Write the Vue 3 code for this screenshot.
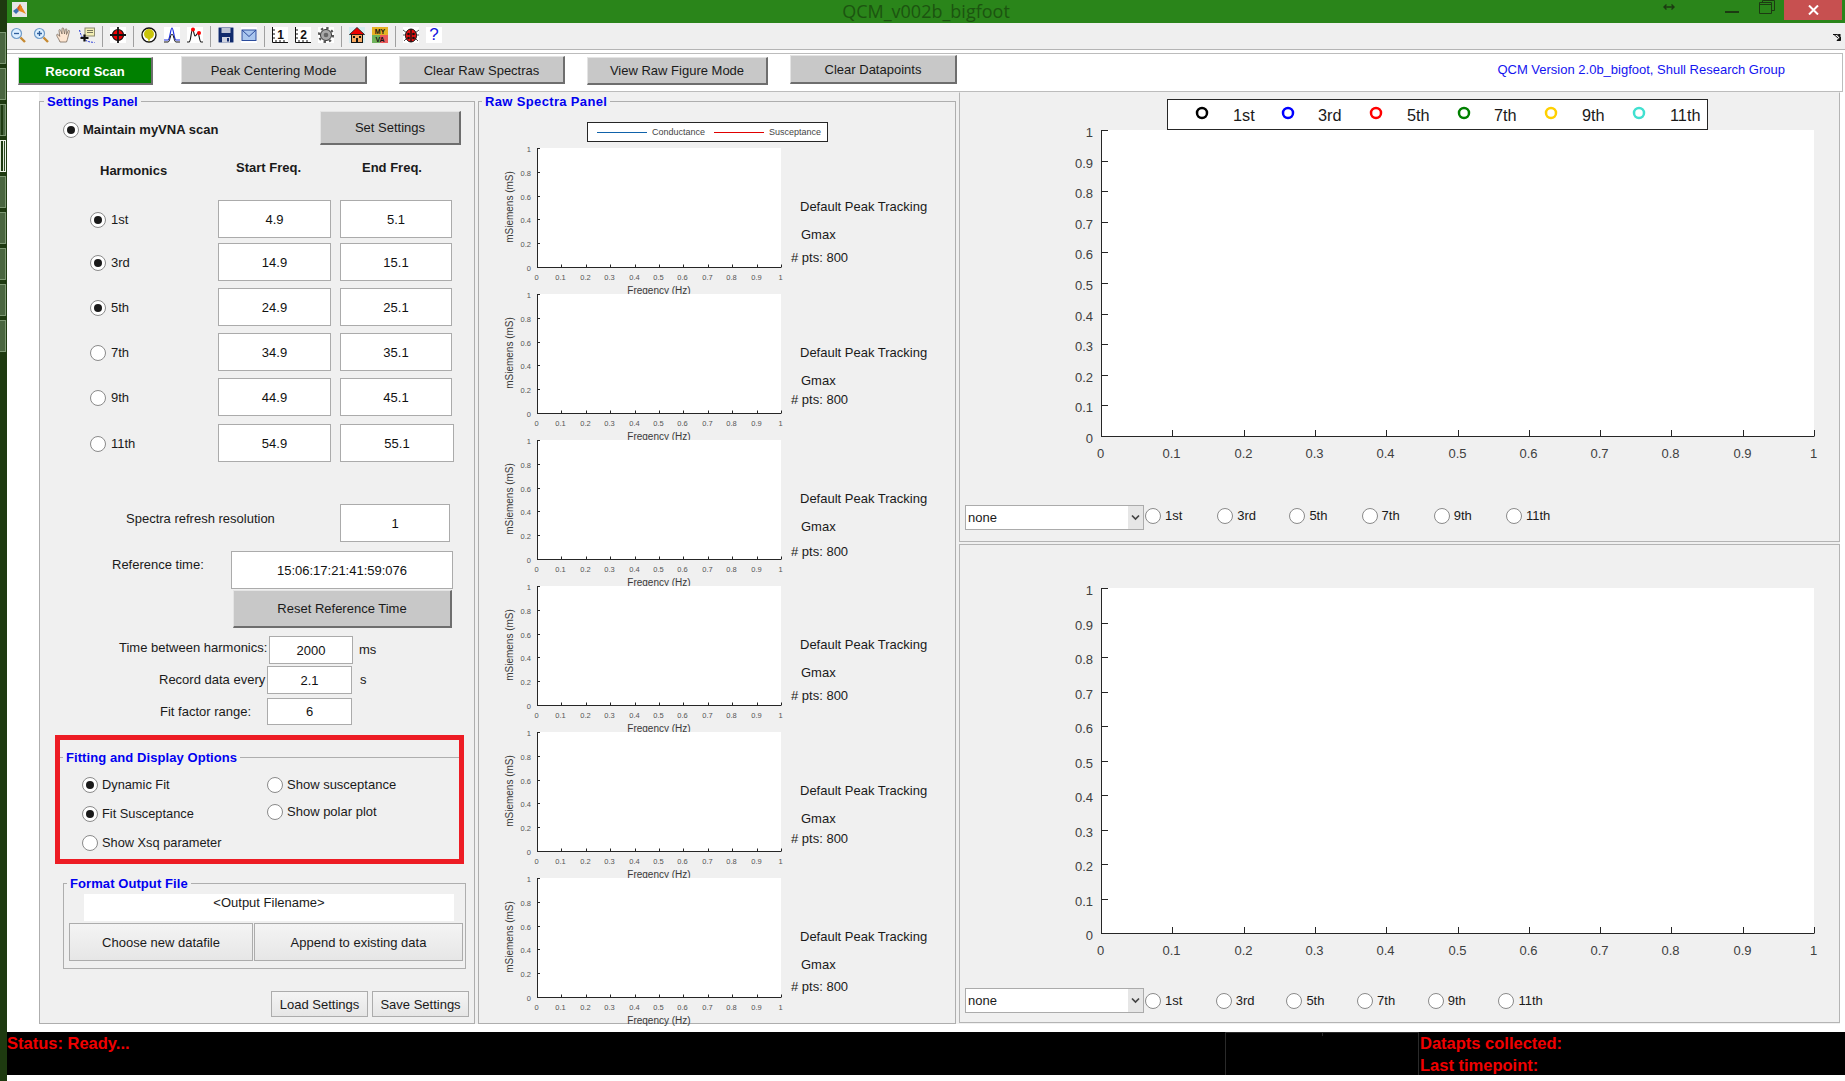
<script setup>
const tiles = ['', '', 'split', 'lit', '', '', '', '', '']
const harmonics = [
  { n: '1st', on: true, s: '4.9', e: '5.1' },
  { n: '3rd', on: true, s: '14.9', e: '15.1' },
  { n: '5th', on: true, s: '24.9', e: '25.1' },
  { n: '7th', on: false, s: '34.9', e: '35.1' },
  { n: '9th', on: false, s: '44.9', e: '45.1' },
  { n: '11th', on: false, s: '54.9', e: '55.1', wide: true }
]
const names = ['1st', '3rd', '5th', '7th', '9th', '11th']
const fmt = (i, n) => (i === 0 ? '0' : i === n ? '1' : (i / n).toFixed(1))
const rawX = Array.from({ length: 11 }, (_, i) => ({ x: Math.round(58 + i * 24.4) + 0.5, t: fmt(i, 10) }))
const rawY = Array.from({ length: 6 }, (_, i) => ({ y: Math.round(124 - i * 23.8) + 0.5, t: fmt(i, 5) }))
const rawRows = [{ gap: 7 }, { gap: 3 }, { gap: 9 }, { gap: 7 }, { gap: 4 }, { gap: 6 }]
const legend = [
  { n: '1st', c: '#000000', m: 242, t: 273 },
  { n: '3rd', c: '#0000ff', m: 328, t: 358 },
  { n: '5th', c: '#ff0000', m: 416, t: 447 },
  { n: '7th', c: '#008000', m: 504, t: 534 },
  { n: '9th', c: '#ffd000', m: 591, t: 622 },
  { n: '11th', c: '#40e0d0', m: 679, t: 710 }
]
const makePlot = (h, top, bottom, wide, cls) => ({
  h, top, bottom, cls, wide,
  xs: Array.from({ length: 11 }, (_, i) => ({ x: Math.round(141 + i * 71.3) + 0.5, t: fmt(i, 10) })),
  ys: Array.from({ length: 11 }, (_, i) => ({ y: Math.round(bottom - (i * (bottom - top)) / 10) + 0.5, t: fmt(i, 10) }))
})
const plots = [makePlot(412, 37, 343, true, 'p1'), makePlot(443, 43, 388, false, 'p2')]
</script>

<template>
  <div class="app">
    <aside class="strip">
      <div v-for="(t, i) in tiles" :key="i" class="tile" :class="t"></div>
    </aside>
    <div class="main">
      <header class="title">
        <div class="title-left">
          <svg class="logo" width="15" height="15" viewBox="0 0 15 15">
            <rect width="15" height="15" fill="#e6e6e6" />
            <polygon points="1,9 5,6 7,9 4,12" fill="#3b6fb0" />
            <polygon points="5,6 8,2 10,5 7,9" fill="#d9551f" />
            <polygon points="8,2 11,7 14,12 10,10 7,9" fill="#e8891c" />
          </svg>
        </div>
        <div class="title-text">QCM_v002b_bigfoot</div>
        <div class="title-right">
          <svg class="resize" width="12" height="8" viewBox="0 0 12 8"><path d="M1 4h10M3.5 1.5L1 4l2.5 2.5M8.5 1.5L11 4 8.5 6.5" fill="none" stroke="#1c3a12" stroke-width="1.4" /></svg>
          <div class="win-min"></div>
          <svg class="win-max" width="16" height="14" viewBox="0 0 16 14"><path d="M3.5 2.5V.5h12v10h-3M.5 2.5h12v11H.5zM.5 4.5h12" fill="none" stroke="#1c3a12" /></svg>
          <div class="win-close"><svg width="11" height="10" viewBox="0 0 11 10"><path d="M1 0.5l9 9M10 0.5l-9 9" stroke="#fff" stroke-width="2" /></svg></div>
        </div>
      </header>

      <nav class="toolbar">
        <svg class="ic" viewBox="0 0 16 16"><circle cx="6.5" cy="6.5" r="5" fill="#dcefff" stroke="#6f9bc8" stroke-width="1.2" /><path d="M10.5 10.5l4.5 4.5" stroke="#c68a32" stroke-width="2.4" /><path d="M4 6.5h5" stroke="#2f5f9c" stroke-width="1.3" /></svg>
        <svg class="ic" viewBox="0 0 16 16"><circle cx="6.5" cy="6.5" r="5" fill="#dcefff" stroke="#6f9bc8" stroke-width="1.2" /><path d="M10.5 10.5l4.5 4.5" stroke="#c68a32" stroke-width="2.4" /><path d="M4 6.5h5M6.5 4v5" stroke="#2f5f9c" stroke-width="1.3" /></svg>
        <svg class="ic" viewBox="0 0 16 16"><path d="M4 15C3 12 1 10 .7 8c0-1 1-1 2 0l1 1.400L3 3.500c0-1.200 1.400-1.200 1.700 0L6 7 6 1.800c0-1.200 1.600-1.200 1.700 0L8.500 7l.8-4.500c.3-1.100 1.600-.9 1.500.3L10.500 7.500l1.600-3.600c.5-1 1.700-.5 1.300.6L12 10c-.3 2-1 3.500-1.500 5z" fill="#fde6d2" stroke="#7a6a5c" stroke-width=".8" /></svg>
        <svg class="ic" viewBox="0 0 16 16"><rect x="6" y="1" width="9.500" height="8" fill="#f3eeb4" stroke="#8c8c70" /><path d="M8 3.500h6M8 5.500h6" stroke="#77775f" /><path d="M.5 3c1 4 2 7 5 9.500s6 2.500 10 3" fill="none" stroke="#2b3ed8" stroke-dasharray="2 1" /><path d="M1.500 11h8M5.500 7.500v7" stroke="#111" stroke-width="2.200" /></svg>
        <i class="sep"></i>
        <svg class="ic" viewBox="0 0 16 16"><rect width="16" height="16" fill="#fff" /><circle cx="8" cy="8" r="5.500" fill="#f00000" stroke="#111" stroke-width="1.200" /><path d="M8 0v16M0 8h16" stroke="#111" stroke-width="1.800" /></svg>
        <i class="sep"></i>
        <svg class="ic" viewBox="0 0 16 16"><circle cx="8" cy="8" r="7" fill="#fff" stroke="#111" stroke-width="1.300" /><circle cx="8" cy="7" r="5" fill="#c9c40c" /><path d="M6.500 11l1.500 4 1.500-4z" fill="#c9c40c" /></svg>
        <svg class="ic" viewBox="0 0 16 16"><rect width="16" height="16" fill="#fff" /><path d="M0 13h4c2 0 2.500-12 4-12s2 12 4 12h4" fill="none" stroke="#1d2fe0" stroke-width="1.200" /><path d="M0 15h4c2 0 2-7 4-8 2 1 2 8 4 8h4" fill="none" stroke="#111" /></svg>
        <svg class="ic" viewBox="0 0 16 16"><rect width="16" height="16" fill="#fff" /><path d="M0 15h2c2 0 2-12 3.500-12S7 9 8 9c1.500 0 2-3 3-3s1.500 9 3 9h2" fill="none" stroke="#111" stroke-width="1.100" /><circle cx="6" cy="2.500" r="2" fill="#f00" /><circle cx="12" cy="6" r="2" fill="#f00" /></svg>
        <i class="sep"></i>
        <svg class="ic ic-save" viewBox="0 0 16 16"><rect width="16" height="16" fill="#fff" /><path d="M.5.500h15v15H.5z" fill="#102a6c" /><rect x="3.500" y="1" width="9" height="5" fill="#bdc3d4" /><rect x="4" y="10" width="8" height="5.500" fill="#cfd3df" /><rect x="9" y="11" width="2" height="3.500" fill="#102a6c" /></svg>
        <svg class="ic" viewBox="0 0 16 16"><rect width="16" height="16" fill="#fff" /><rect x="1" y="3" width="14" height="10.500" fill="#aac6ee" stroke="#2c4c9c" /><path d="M1 3l7 6.500L15 3" fill="none" stroke="#2c4c9c" /></svg>
        <i class="sep"></i>
        <svg class="ic" viewBox="0 0 16 16"><rect width="16" height="16" fill="#fff" /><path d="M.5 0v15.500H16" fill="none" stroke="#111" /><path d="M0 3h3M0 7h3M0 11h3M4 13v3M8 13v3M12 13v3" stroke="#111" /><text class="ruler" x="8.500" y="12">1</text></svg>
        <svg class="ic" viewBox="0 0 16 16"><rect width="16" height="16" fill="#fff" /><path d="M.5 0v15.500H16" fill="none" stroke="#111" /><path d="M0 3h3M0 7h3M0 11h3M4 13v3M8 13v3M12 13v3" stroke="#111" /><text class="ruler" x="8.500" y="12">2</text></svg>
        <svg class="ic" viewBox="0 0 16 16"><rect width="16" height="16" fill="#fff" /><circle cx="8" cy="8" r="5.500" fill="#a8a8a8" stroke="#333" /><circle cx="8" cy="8" r="7" fill="none" stroke="#555" stroke-width="2.200" stroke-dasharray="2.400 3.100" /><circle cx="8" cy="8" r="2.300" fill="#666" /></svg>
        <i class="sep"></i>
        <svg class="ic" viewBox="0 0 16 16"><rect width="16" height="16" fill="#d6ecf0" /><rect x="2.500" y="7" width="11" height="8.500" fill="#f7a860" stroke="#111" /><polygon points="8,.500 15.500,7.500 .5,7.500" fill="#ee0000" stroke="#111" stroke-width=".8" /><rect x="4" y="9" width="2" height="2" fill="#111" /><rect x="10" y="9" width="2" height="2" fill="#111" /><rect x="7" y="11" width="2" height="4.500" fill="#111" /></svg>
        <svg class="ic" viewBox="0 0 16 16"><rect width="16" height="8" fill="#e6b224" /><rect y="8" width="8" height="8" fill="#6fb35c" /><rect x="8" y="8" width="8" height="8" fill="#ea5a5a" /><text class="vna" x="8" y="7">MY</text><text class="vna" x="8" y="15">VA</text></svg>
        <i class="sep"></i>
        <svg class="ic" viewBox="0 0 16 16"><rect width="16" height="16" fill="#fff" /><path d="M0 3l4 3M16 3l-4 3M0 8h3M16 8h-3M1 14l3-3M15 14l-3-3" stroke="#555" /><ellipse cx="8" cy="8.500" rx="5.500" ry="6.500" fill="#ea1010" stroke="#111" /><path d="M8 2v13" stroke="#111" stroke-width="1.300" /><circle cx="5.500" cy="7" r="1.300" fill="#111" /><circle cx="10.500" cy="7" r="1.300" fill="#111" /><circle cx="5.500" cy="11" r="1.300" fill="#111" /><circle cx="10.500" cy="11" r="1.300" fill="#111" /></svg>
        <span class="help">?</span>
        <svg class="grip" width="8" height="7" viewBox="0 0 8 7"><path d="M0 .5h4L7 3.500V0M4 6.500h3.500V3L4 6.500zM1 .5L5 4" fill="#111" stroke="#111" /></svg>
      </nav>

      <section class="actions">
        <button class="mbtn record">Record Scan</button>
        <button class="mbtn peak">Peak Centering Mode</button>
        <button class="mbtn clear-raw">Clear Raw Spectras</button>
        <button class="mbtn view">View Raw Figure Mode</button>
        <button class="mbtn clear-data">Clear Datapoints</button>
        <span class="version">QCM Version 2.0b_bigfoot, Shull Research Group</span>
      </section>

      <section class="content">
        <div class="panels">
          <fieldset class="frame settings">
            <legend class="flegend">Settings Panel</legend>
            <div class="col">
              <div class="maintain">
                <span class="radio on"></span>
                <b class="maintain-label">Maintain myVNA scan</b>
                <button class="mbtn set">Set Settings</button>
              </div>
              <div class="harm">
                <b class="h-harm">Harmonics</b>
                <b class="h-start">Start Freq.</b>
                <b class="h-end">End Freq.</b>
                <template v-for="h in harmonics" :key="h.n">
                  <div class="harm-radio"><span class="radio" :class="{ on: h.on }"></span><span>{{ h.n }}</span></div>
                  <div class="box harm-box">{{ h.s }}</div>
                  <div class="box harm-box" :class="{ wide: h.wide }">{{ h.e }}</div>
                </template>
              </div>
              <div class="spectra-row">
                <span class="spectra-label">Spectra refresh resolution</span>
                <div class="box spectra-box">1</div>
              </div>
              <div class="ref-row">
                <span class="ref-label">Reference time:</span>
                <div class="box ref-box">15:06:17:21:41:59:076</div>
              </div>
              <button class="mbtn reset">Reset Reference Time</button>
              <div class="trow t1"><span class="tl">Time between harmonics:</span><div class="box tb">2000</div><span class="unit">ms</span></div>
              <div class="trow t2"><span class="tl">Record data every</span><div class="box tb">2.1</div><span class="unit">s</span></div>
              <div class="trow t3"><span class="tl">Fit factor range:</span><div class="box tb">6</div></div>

              <div class="redbox">
                <fieldset class="frame fitting">
                  <legend class="flegend">Fitting and Display Options</legend>
                  <div class="fit-cols">
                    <div class="fit-left">
                      <div class="opt"><span class="radio on"></span><span>Dynamic Fit</span></div>
                      <div class="opt"><span class="radio on"></span><span>Fit Susceptance</span></div>
                      <div class="opt"><span class="radio"></span><span>Show Xsq parameter</span></div>
                    </div>
                    <div class="fit-right">
                      <div class="opt"><span class="radio"></span><span>Show susceptance</span></div>
                      <div class="opt"><span class="radio"></span><span>Show polar plot</span></div>
                    </div>
                  </div>
                </fieldset>
              </div>

              <fieldset class="frame format">
                <legend class="flegend">Format Output File</legend>
                <div class="filename">&lt;Output Filename&gt;</div>
                <div class="file-btns">
                  <button class="gbtn choose">Choose new datafile</button>
                  <button class="gbtn append">Append to existing data</button>
                </div>
              </fieldset>

              <div class="save-row">
                <button class="gbtn load">Load Settings</button>
                <button class="gbtn load">Save Settings</button>
              </div>
            </div>
          </fieldset>

          <fieldset class="frame raw">
            <legend class="flegend">Raw Spectra Panel</legend>
            <div class="raw-legend">
              <i class="rl-line blue"></i><span class="rl-text">Conductance</span>
              <i class="rl-line red"></i><span class="rl-text">Susceptance</span>
            </div>
            <div v-for="(r, idx) in rawRows" :key="idx" class="raw-row">
              <svg class="raw-svg" width="310" height="146" viewBox="0 0 310 146">
                <rect x="58" y="5" width="244" height="119" fill="#fff" />
                <path d="M58.500 5V124.500H302.500" fill="none" stroke="#262626" />
                <path v-for="t in rawX" :key="t.t" :d="`M${t.x} 124V121.500`" stroke="#262626" />
                <path v-for="t in rawY" :key="t.t" :d="`M58 ${t.y}H61`" stroke="#262626" />
                <text v-for="t in rawX" :key="'x' + t.t" class="rt" :x="t.x - 1" y="137" text-anchor="middle">{{ t.t }}</text>
                <text v-for="t in rawY" :key="'y' + t.t" class="rt" x="52" :y="t.y + 3" text-anchor="end">{{ t.t }}</text>
                <text class="ra" x="180" y="150.500" text-anchor="middle">Freqency (Hz)</text>
                <text class="ra" x="0" y="0" text-anchor="middle" transform="translate(34 64) rotate(-90)">mSiemens (mS)</text>
              </svg>
              <div class="raw-side">
                <span class="s1">Default Peak Tracking</span>
                <span class="s2">Gmax</span>
                <span class="s3" :style="{ marginTop: r.gap + 'px' }"># pts: 800</span>
              </div>
            </div>
          </fieldset>

          <div class="right">
            <div v-for="p in plots" :key="p.cls" class="plot-panel" :class="p.cls">
              <svg class="plot-svg" width="879" :height="p.h" :viewBox="`0 0 879 ${p.h}`">
                <rect x="141" :y="p.top" width="713" :height="p.bottom - p.top" fill="#fff" />
                <path :d="`M141.500 ${p.top}V${p.bottom + 0.5}H854.500`" fill="none" stroke="#262626" />
                <path v-for="t in p.xs" :key="t.t" :d="`M${t.x} ${p.bottom}v-6`" stroke="#262626" />
                <path v-for="t in p.ys" :key="t.t" :d="`M141 ${t.y}h7`" stroke="#262626" />
                <text v-for="t in p.xs" :key="'x' + t.t" class="pt" :x="t.x - 1" :y="p.bottom + 22" text-anchor="middle">{{ t.t }}</text>
                <text v-for="t in p.ys" :key="'y' + t.t" class="pt" x="133" :y="t.y + 6" text-anchor="end">{{ t.t }}</text>
                <g v-if="p.wide">
                  <rect x="207.500" y="6.500" width="540" height="30" fill="#fff" stroke="#262626" />
                  <template v-for="l in legend" :key="l.n">
                    <circle :cx="l.m" cy="20" r="5" fill="none" :stroke="l.c" stroke-width="2.500" />
                    <text class="lt" :x="l.t" y="28">{{ l.n }}</text>
                  </template>
                </g>
              </svg>
              <div class="plot-controls">
                <div class="select">
                  <span class="sel-text">none</span>
                  <span class="sel-arrow"><svg width="9" height="7" viewBox="0 0 9 7"><path d="M1 1.500l3.500 3.500L8 1.500" fill="none" stroke="#444" stroke-width="1.700" /></svg></span>
                </div>
                <div v-for="n in names" :key="n" class="ph"><span class="radio"></span><span>{{ n }}</span></div>
              </div>
            </div>
          </div>
        </div>
      </section>

      <footer class="status">
        <div class="st-cell st-main">Status: Ready...</div>
        <div class="st-cell st-mid"></div>
        <div class="st-cell st-data">
          <div>Datapts collected:</div>
          <div>Last timepoint:</div>
        </div>
      </footer>
      <div class="foot"></div>
    </div>
  </div>
</template>

<style>
html, body { margin: 0; background: #fff; }
</style>

<style scoped>
* { box-sizing: border-box; }
.app { width: 1845px; height: 1081px; display: flex; overflow: hidden; background: #fff; font: 13px/16px "Liberation Sans", Arial, sans-serif; color: #1a1a1a; }

.strip { width: 7px; flex: none; background: #1e3a10; padding-top: 32px; display: flex; flex-direction: column; gap: 4px; }
.tile { width: 6px; height: 32px; background: #4a6640; border: 1px solid #7d9873; border-left: 0; }
.tile.split { background: linear-gradient(90deg, #4a6640 0 1px, #1e3a10 1px 3px, #4a6640 3px); }
.tile.lit { background: linear-gradient(90deg, #dfe9d8 0 1px, #1e3a10 1px 3px, #dfe9d8 3px 4px, #2c4a20 4px); border-color: #eef3ea; }

.main { flex: 1; min-width: 0; display: flex; flex-direction: column; }

.title { height: 23px; flex: none; background: #2a851a; display: grid; grid-template-columns: 1fr auto 1fr; align-items: center; }
.title-left { display: flex; padding-left: 5px; }
.logo { margin-top: -4px; }
.title-text { font: 18px/23px "Open Sans", sans-serif; color: #1c5410; }
.title-right { display: flex; align-items: flex-start; justify-content: flex-end; height: 23px; padding-right: 3px; }
.resize { margin-top: 3px; margin-right: 50px; }
.win-min { width: 14px; height: 2px; background: #1c3a12; margin-top: 11px; margin-right: 20px; }
.win-max { margin-top: 0; margin-right: 9px; }
.win-close { width: 58px; height: 20px; background: #c75050; display: flex; align-items: center; justify-content: center; }

.toolbar { height: 27px; flex: none; background: #efefef; border-bottom: 1px solid #b4b4b4; display: flex; align-items: flex-start; gap: 7px; padding: 4px 0 0 3px; }
.ic { width: 16px; height: 16px; flex: none; display: block; }
.sep { width: 1px; height: 21px; margin-top: -1px; background: #a0a0a0; flex: none; }
.grip { margin-left: auto; margin-right: 4px; margin-top: 7px; }
.ruler { font: 700 12px "Liberation Sans", sans-serif; fill: #111; text-anchor: middle; }
.vna { font: 700 7px "Liberation Sans", sans-serif; fill: #111; text-anchor: middle; }
.help { width: 16px; height: 16px; flex: none; background: #fff; color: #1414e0; font: 17px/16px "Liberation Sans", sans-serif; text-align: center; }

.actions { height: 39px; flex: none; margin-top: 3px; margin-right: 2px; background: #fff; border: 1px solid #bcbcbc; border-left: 0; display: flex; align-items: flex-start; }
.mbtn { font: 13px/16px "Liberation Sans", sans-serif; color: #1a1a1a; background: #c8c8c8; border: 1px solid; border-color: #e4e4e4 #6e6e6e #6e6e6e #e4e4e4; border-width: 1px 2px 2px 1px; padding: 2px 0 0; flex: none; }
.record { width: 135px; height: 28px; margin: 3px 0 0 11px; background: #008000; color: #fff; font-weight: 700; border-color: #cfcfcf #6e6e6e #6e6e6e #cfcfcf; }
.peak { width: 186px; height: 28px; margin: 2px 0 0 28px; }
.clear-raw { width: 166px; height: 28px; margin: 2px 0 0 32px; }
.view { width: 181px; height: 28px; margin: 3px 0 0 22px; padding-top: 0; }
.clear-data { width: 167px; height: 29px; margin: 1px 0 0 22px; }
.version { margin-left: auto; margin-right: 57px; margin-top: 8px; color: #1414f0; font-size: 13px; }

.content { height: 940px; flex: none; padding: 0 5px 8px 32px; }
.panels { height: 932px; background: #f0f0f0; display: flex; align-items: flex-start; }

.frame { margin: 0; padding: 0; border: 1px solid #aeaeae; min-width: 0; }
.flegend { padding: 0 3px; margin-left: 3px; color: #0000f0; font-weight: 700; line-height: 16px; transform: translateY(1px); letter-spacing: .08px; }
.col { display: flex; flex-direction: column; }
.box { background: #fff; border: 1px solid #ababab; display: flex; align-items: center; justify-content: center; color: #111; flex: none; padding-top: 1px; }

.settings { width: 436px; height: 931px; margin-top: 1px; }
.settings > .flegend { margin-left: 4px; }
.maintain { display: flex; align-items: center; height: 34px; margin-top: 2px; padding-left: 23px; padding-right: 13px; }
.maintain .radio { margin-top: 3px; }
.maintain-label { margin-left: 4px; margin-top: 3px; }
.set { width: 141px; height: 34px; margin-left: auto; padding-top: 0; }

.radio { width: 16px; height: 16px; flex: none; border-radius: 50%; border: 1px solid #8a8a8a; background: #fff; display: inline-flex; align-items: center; justify-content: center; }
.radio.on::after { content: ""; width: 8px; height: 8px; border-radius: 50%; background: #1a1a1a; }

.harm { display: grid; grid-template-columns: 169px 113px 112px; column-gap: 9px; grid-template-rows: 55px 43px 45px 45px 45px 46px 38px; }
.h-harm { margin: 18px 0 0 60px; }
.h-start { margin: 15px 0 0 18px; }
.h-end { margin: 15px 0 0 22px; }
.harm-radio { display: flex; align-items: center; gap: 5px; height: 38px; padding: 2px 0 0 50px; }
.harm-box { height: 38px; }
.harm-box.wide { width: 114px; }

.spectra-row { display: flex; align-items: center; height: 38px; margin-top: 42px; }
.spectra-label { width: 300px; padding-left: 86px; margin-bottom: 8px; }
.spectra-box { width: 110px; height: 38px; }
.ref-row { display: flex; margin-top: 9px; }
.ref-label { width: 191px; padding-left: 72px; margin-top: 6px; }
.ref-box { width: 222px; height: 38px; }
.reset { width: 219px; height: 38px; margin: 1px 0 0 193px; padding-top: 0; }
.trow { display: flex; align-items: center; }
.tl { flex: none; }
.tb { height: 100%; }
.unit { margin-left: 6px; }
.t1 { height: 28px; margin-top: 8px; }
.t1 .tl { width: 229px; padding-left: 79px; margin-bottom: 4px; }
.t1 .tb { width: 84px; }
.t2 { height: 28px; margin-top: 2px; }
.t2 .tl { width: 227px; padding-left: 119px; }
.t2 .tb { width: 85px; }
.t2 .unit { margin-left: 8px; }
.t3 { height: 27px; margin-top: 4px; }
.t3 .tl { width: 227px; padding-left: 120px; }
.t3 .tb { width: 85px; }

.redbox { width: 409px; height: 129px; margin: 10px 0 0 15px; border: 5px solid #ed1c24; }
.fitting { margin-top: 9px; border-width: 1px 0 0; }
.fit-cols { display: flex; }
.fit-left { width: 207px; padding: 10px 0 0 22px; display: flex; flex-direction: column; gap: 9px; font-size: 12.800px; }
.fit-right { padding-top: 10px; display: flex; flex-direction: column; gap: 7px; }
.opt { display: flex; align-items: center; gap: 4px; height: 20px; }

.format { width: 403px; height: 94px; margin: 11px 0 0 23px; }
.filename { width: 370px; height: 27px; margin: 3px 0 0 20px; padding-top: 1px; background: #fff; text-align: center; }
.file-btns { display: flex; gap: 1px; margin: 2px 0 0 5px; }
.gbtn { font: 13px/16px "Liberation Sans", sans-serif; color: #1a1a1a; background: linear-gradient(#f4f4f4, #e6e6e6); border: 1px solid #acacac; padding: 2px 0 0; flex: none; }
.choose { width: 184px; height: 38px; }
.append { width: 209px; height: 38px; }
.save-row { display: flex; justify-content: flex-end; gap: 4px; margin: 22px 5px 0 0; }
.load { width: 97px; height: 26px; }

.raw { width: 478px; height: 931px; margin: 1px 0 0 3px; }
.raw > .flegend { letter-spacing: .35px; }
.raw-legend { width: 241px; height: 20px; margin: 13px 0 1px 108px; background: #fff; border: 1px solid #262626; display: flex; align-items: center; }
.rl-line { width: 50px; height: 1px; flex: none; margin-left: 9px; }
.rl-line.blue { background: #0f62aa; }
.rl-line.red { background: #e00000; }
.rl-text { font-size: 9px; color: #444; margin-left: 5px; }
.raw-row { display: flex; height: 146px; }
.raw-svg { display: block; overflow: visible; flex: none; }
.rt { font: 7.500px "Liberation Sans", sans-serif; fill: #555; }
.ra { font: 10px "Liberation Sans", sans-serif; fill: #3a3a3a; }
.raw-side { display: flex; flex-direction: column; align-items: flex-start; margin-left: 2px; padding-top: 56px; color: #1a1a1a; }
.s1 { padding-left: 9px; }
.s2 { padding-left: 10px; margin-top: 12px; }

.right { margin-left: 3px; width: 881px; display: flex; flex-direction: column; gap: 2px; }
.plot-panel { border: 1px solid #b4b4b4; border-top-color: transparent; }
.p1 { height: 450px; }
.p2 { height: 479px; border-top-color: #b4b4b4; }
.plot-svg { display: block; }
.pt { font: 13px "Liberation Sans", sans-serif; fill: #404040; }
.lt { font: 16.300px "Liberation Sans", sans-serif; fill: #1a1a1a; }
.plot-controls { display: flex; align-items: center; height: 25px; padding-left: 5px; }
.select { width: 179px; height: 25px; background: #fff; border: 1px solid #ababab; display: flex; align-items: center; justify-content: space-between; margin-right: 1px; flex: none; }
.sel-text { padding-left: 2px; }
.sel-arrow { width: 15px; height: 23px; background: #e6e6e6; display: flex; align-items: center; justify-content: center; }
.ph { display: flex; align-items: center; gap: 4px; flex: none; }
.p1 .ph { width: 72.200px; margin-bottom: 4px; }
.p2 .ph { width: 70.700px; }

.status { height: 43px; flex: none; background: #000; display: flex; color: #f00000; font-weight: 700; font-size: 16.500px; line-height: 22px; }
.st-cell { height: 43px; }
.st-main { width: 1218px; }
.st-mid { width: 193px; border-left: 1px solid #2a2a2a; border-top: 1px solid #2a2a2a; background: linear-gradient(#2a2a2a, #2a2a2a) 96px 0 / 1px 3px no-repeat; }
.st-data { border-left: 1px solid #2a2a2a; padding-left: 1px; flex: 1; }
.foot { flex: 1; background: #fff; }
</style>
